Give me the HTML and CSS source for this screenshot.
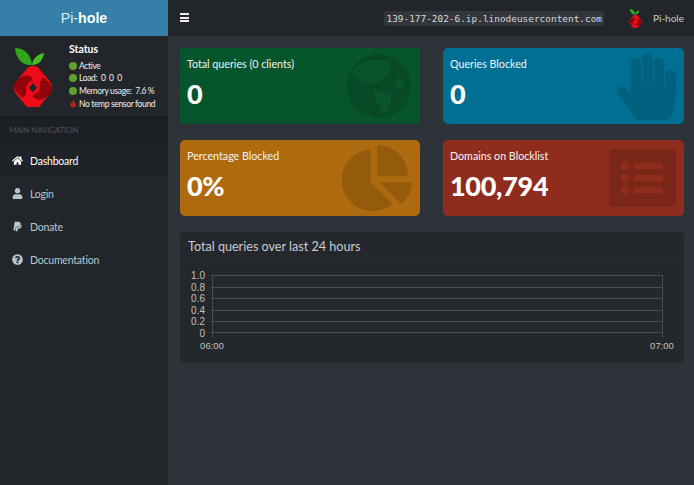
FILE: index.html
```html
<!DOCTYPE html>
<html lang="en">
<head>
    <meta charset="UTF-8">
    <meta name="viewport" content="width=device-width, initial-scale=1.0">
    <title>Pi-hole Admin Console</title>
    <link rel="stylesheet" href="styles.css">
</head>
<body>
    <div class="wrapper">
        <!-- Sidebar -->
        <aside class="sidebar">
            <div class="brand">Pi-<b>hole</b></div>
            <div class="user-panel">
                <svg class="logo" viewBox="0 0 40 59">
                    <path fill="#2fa81c" d="M2 0C10 0 18 5 19 17C11 18 3 12 2 0Z"/>
                    <path fill="#44c11f" d="M19 17C20 10 25 6 31 5C30 12 26 17 19 17Z"/>
                    <g transform="translate(0 -3.500) scale(1 1.200)">
                        <path fill="#ee0b19" d="M14 20C17 17 23 17 26 20L37 31C40 34 40 38 37 41L26 52C23 55 17 55 14 52L3 41C0 38 0 34 3 31Z"/>
                        <path fill="#8f0509" d="M5 29C12 24 19 26 20 30C15 31 13 33 13 39C13 43 11 44 9 44L3 39C-1 35 1 32 5 29Z"/>
                        <path fill="#8f0509" d="M35 43C28 48 21 46 20 42C25 41 27 39 27 33C27 29 29 28 31 28L37 33C41 37 39 40 35 43Z"/>
                        <path fill="#22262b" d="M20 32L24 36L20 40L16 36Z"/>
                    </g>
                </svg>
                <div class="status">
                    <div class="status-title">Status</div>
                    <div class="status-row"><span class="dot"></span>Active</div>
                    <div class="status-row"><span class="dot"></span>Load:&nbsp; 0&nbsp; 0&nbsp; 0</div>
                    <div class="status-row"><span class="dot"></span>Memory usage:&nbsp; 7.6 %</div>
                    <div class="status-row">
                        <svg class="flame" viewBox="0 0 10 10"><path fill="#b3261e" d="M5 0C5.500 2 8.500 3.500 8.500 6.500C8.500 8.500 7 10 5 10C3 10 1.500 8.500 1.500 6.500C1.500 5 2.200 4 3 3.200C3.200 4 3.500 4.500 4 4.800C4.500 3.500 4.300 1.500 5 0Z"/></svg>No temp sensor found
                    </div>
                </div>
            </div>
            <div class="nav-header">MAIN NAVIGATION</div>
            <nav class="nav">
                <a class="nav-item active">
                    <svg class="nav-icon" viewBox="0 0 576 512"><path d="M280.37 148.26L96 300.11V464a16 16 0 0 0 16 16l112.06-.29a16 16 0 0 0 15.92-16V368a16 16 0 0 1 16-16h64a16 16 0 0 1 16 16v95.64a16 16 0 0 0 16 16.05L464 480a16 16 0 0 0 16-16V300L295.67 148.26a12.19 12.19 0 0 0-15.3 0zM571.6 251.47L488 182.56V44.05a12 12 0 0 0-12-12h-56a12 12 0 0 0-12 12v72.61L318.47 43a48 48 0 0 0-61 0L4.34 251.47a12 12 0 0 0-1.6 16.9l25.5 31A12 12 0 0 0 45.15 301l235.22-193.74a12.19 12.19 0 0 1 15.3 0L530.9 301a12 12 0 0 0 16.9-1.6l25.5-31a12 12 0 0 0-1.7-16.93z"/></svg>
                    Dashboard
                </a>
                <a class="nav-item">
                    <svg class="nav-icon" viewBox="0 0 448 512"><path d="M224 256c70.7 0 128-57.3 128-128S294.7 0 224 0 96 57.3 96 128s57.3 128 128 128zm89.6 32h-16.7c-22.2 10.2-46.9 16-72.9 16s-50.6-5.800-72.900-16h-16.700C60.200 288 0 348.200 0 422.400V464c0 26.500 21.500 48 48 48h352c26.500 0 48-21.500 48-48v-41.600c0-74.200-60.200-134.400-134.400-134.400z"/></svg>
                    Login
                </a>
                <a class="nav-item">
                    <svg class="nav-icon" viewBox="0 0 384 512"><path d="M111.4 295.9c-3.5 19.2-17.4 108.7-21.5 134-.3 1.8-1 2.5-3 2.5H12.3c-7.6 0-13.1-6.6-12.1-13.9L58.8 46.6c1.5-9.6 10.1-16.9 20-16.9 152.3 0 165.1-3.7 204 11.4 60.1 23.3 65.6 79.5 44 140.3-21.5 62.6-72.5 89.5-140.1 90.3-43.4.7-69.5-7-75.3 24.2zM357.1 152c-1.8-1.3-2.5-1.8-3 1.3-2 11.4-5.1 22.5-8.8 33.6-39.9 113.8-150.5 103.9-204.5 103.9-6.1 0-10.1 3.3-10.9 9.4-22.6 140.4-27.1 169.7-27.1 169.7-1 7.1 3.5 12.9 10.6 12.9h63.5c8.6 0 15.7-6.3 17.4-14.9.7-5.4-1.1 6.1 14.4-91.3 4.6-22 14.3-19.7 29.3-19.7 71 0 126.4-28.8 142.9-112.3 6.5-34.8 4.6-71.4-23.8-92.6z"/></svg>
                    Donate
                </a>
                <a class="nav-item">
                    <svg class="nav-icon" viewBox="0 0 512 512"><path d="M504 256c0 136.997-111.043 248-248 248S8 392.997 8 256C8 119.083 119.043 8 256 8s248 111.083 248 248zM262.655 90c-54.497 0-89.255 22.957-116.549 63.758-3.536 5.286-2.353 12.415 2.715 16.258l34.699 26.310c5.205 3.947 12.621 3.008 16.665-2.122 17.864-22.658 30.113-35.797 57.303-35.797 20.429 0 45.698 13.148 45.698 32.958 0 14.976-12.363 22.667-32.534 33.976C247.128 238.528 216 254.941 216 296v4c0 6.627 5.373 12 12 12h56c6.627 0 12-5.373 12-12v-1.333c0-28.462 83.186-29.647 83.186-106.667 0-58.002-60.165-102-116.531-102zM256 338c-25.365 0-46 20.635-46 46 0 25.364 20.635 46 46 46s46-20.636 46-46c0-25.365-20.635-46-46-46z"/></svg>
                    Documentation
                </a>
            </nav>
        </aside>

        <div class="main">
            <!-- Top bar -->
            <header class="topbar">
                <div class="burger"><span></span><span></span><span></span></div>
                <code class="hostname">139-177-202-6.ip.linodeusercontent.com</code>
                <svg class="logo-small" viewBox="0 0 40 59">
                    <path fill="#2fa81c" d="M2 0C10 0 18 5 19 17C11 18 3 12 2 0Z"/>
                    <path fill="#44c11f" d="M19 17C20 10 25 6 31 5C30 12 26 17 19 17Z"/>
                    <g transform="translate(0 -3.500) scale(1 1.200)">
                        <path fill="#ee0b19" d="M14 20C17 17 23 17 26 20L37 31C40 34 40 38 37 41L26 52C23 55 17 55 14 52L3 41C0 38 0 34 3 31Z"/>
                        <path fill="#8f0509" d="M5 29C12 24 19 26 20 30C15 31 13 33 13 39C13 43 11 44 9 44L3 39C-1 35 1 32 5 29Z"/>
                        <path fill="#8f0509" d="M35 43C28 48 21 46 20 42C25 41 27 39 27 33C27 29 29 28 31 28L37 33C41 37 39 40 35 43Z"/>
                    </g>
                </svg>
                <span class="topbar-name">Pi-hole</span>
            </header>

            <div class="content">
                <div class="cards">
                    <div class="card green">
                        <div class="card-title">Total queries (0 clients)</div>
                        <div class="card-value">0</div>
                        <svg class="card-icon globe" viewBox="0 0 64 64">
                            <circle cx="32" cy="32" r="32" fill="#064a27"/>
                            <path fill="#07542d" d="M14 9C20 6 28 5 34 6C39 7 43 8 44 11C43 15 42 17 41 19C37 23 35 27 31 29C26 30 21 30 17 29C13 27 11 25 9 23C7 22 5 21 4 19C7 15 10 12 14 9ZM27 36C33 37 39 39 44 43C44 48 43 52 41 56C39 59 38 60 36 61C35 56 33 53 31 49C29 45 27 41 27 36ZM51 23C54 24 56 26 57 29C57 32 56 34 54 36C51 34 49 32 47 29C48 27 49 25 51 23Z"/>
                        </svg>
                    </div>
                    <div class="card blue">
                        <div class="card-title">Queries Blocked</div>
                        <div class="card-value">0</div>
                        <svg class="card-icon hand" viewBox="0 0 448 512"><path fill="#02617f" d="M408.781 128.007C386.356 127.578 368 146.360 368 168.790V256h-8V79.790c0-22.430-18.356-41.212-40.781-40.783C297.488 39.423 280 57.169 280 79v177h-8V40.790C272 18.360 253.644-.422 231.219.007 209.488.423 192 18.169 192 40v216h-8V80.790c0-22.430-18.356-41.212-40.781-40.783C121.488 40.423 104 58.169 104 80v235.992l-31.648-43.519c-12.993-17.866-38.009-21.817-55.877-8.823-17.865 12.994-21.815 38.010-8.822 55.877l125.601 172.705A48 48 0 0 0 171.070 512h197.940c22.270 0 41.620-15.320 46.710-37l26.570-112.920a192 192 0 0 0 5.710-46.440V168c0-21.831-17.488-39.577-39.219-40z"/></svg>
                    </div>
                    <div class="card orange">
                        <div class="card-title">Percentage Blocked</div>
                        <div class="card-value">0%</div>
                        <svg class="card-icon pie" viewBox="0 0 544 512"><path fill="#945b0c" d="M527.790 288H290.500l158.030 158.030c6.040 6.040 15.980 6.530 22.190.680 38.700-36.460 65.320-85.610 73.130-140.860 1.340-9.460-6.510-17.850-16.060-17.850zm-15.830-64.800C503.720 103.740 408.260 8.280 288.800.040 279.680-.590 272 7.100 272 16.240V240h223.770c9.140 0 16.820-7.680 16.190-16.800zM224 288V50.710c0-9.550-8.390-17.400-17.840-16.060C86.990 51.490-4.100 155.600.140 280.370 4.500 408.510 114.830 513.590 243.030 511.980c50.400-.630 96.970-16.870 135.260-44.030 7.900-5.600 8.420-17.230 1.570-24.080L224 288z"/></svg>
                    </div>
                    <div class="card red">
                        <div class="card-title">Domains on Blocklist</div>
                        <div class="card-value">100,794</div>
                        <svg class="card-icon list" viewBox="0 0 67 58">
                            <rect width="67" height="58" rx="5" fill="#7a2619"/>
                            <g fill="#8f2c1e">
                                <circle cx="16" cy="17" r="4.500"/><circle cx="16" cy="29" r="4.500"/><circle cx="16" cy="41" r="4.500"/>
                                <rect x="25" y="14" width="29" height="6.500" rx="1.500"/><rect x="25" y="26" width="29" height="6.500" rx="1.500"/><rect x="25" y="38" width="29" height="6.500" rx="1.500"/>
                            </g>
                        </svg>
                    </div>
                </div>

                <section class="chart-box">
                    <h3 class="chart-title">Total queries over last 24 hours</h3>
                    <svg class="chart" viewBox="0 0 504 100">
                        <g class="grid">
                            <line x1="31" x2="482" y1="12.500" y2="12.500"/>
                            <line x1="31" x2="482" y1="24.500" y2="24.500"/>
                            <line x1="31" x2="482" y1="35.500" y2="35.500"/>
                            <line x1="31" x2="482" y1="47.500" y2="47.500"/>
                            <line x1="31" x2="482" y1="58.500" y2="58.500"/>
                            <line x1="31" x2="482" y1="69.500" y2="69.500"/>
                            <line x1="32.500" x2="32.500" y1="12" y2="74"/>
                            <line x1="482.500" x2="482.500" y1="12" y2="74"/>
                        </g>
                        <g class="ticks">
                            <text x="25" y="16">1.0</text>
                            <text x="25" y="27.500">0.8</text>
                            <text x="25" y="39">0.6</text>
                            <text x="25" y="50.500">0.4</text>
                            <text x="25" y="62">0.2</text>
                            <text x="25" y="73.500">0</text>
                        </g>
                        <text class="xtick" x="32" y="86">06:00</text>
                        <text class="xtick" x="482" y="86">07:00</text>
                    </svg>
                </section>
            </div>
        </div>
    </div>
</body>
</html>
```

FILE: styles.css
```css
* {
    box-sizing: border-box;
}

body {
    margin: 0;
    height: 485px;
    overflow: hidden;
    font-family: "Lato", "Open Sans", sans-serif;
    background-color: #2e3239;
    color: #fff;
}

.wrapper {
    display: flex;
    height: 100%;
}

/* Sidebar */
.sidebar {
    width: 168px;
    flex-shrink: 0;
    background-color: #22262b;
}

.brand {
    height: 36px;
    background-color: #367fa9;
    color: #dfeaf2;
    font-family: "Liberation Sans", sans-serif;
    font-size: 14.200px;
    line-height: 36px;
    text-align: center;
}

.brand b {
    color: #fff;
}

.user-panel {
    display: flex;
    height: 80px;
    padding: 6px 0 0 13px;
}

.logo {
    width: 40px;
    height: 59px;
    margin-top: 6px;
    flex-shrink: 0;
}

.status {
    margin-left: 16px;
    font-size: 8.500px;
    letter-spacing: -0.350px;
    color: #f0f0f0;
}

.status-title {
    font-size: 10.500px;
    font-weight: 700;
    letter-spacing: 0;
    line-height: 14px;
    margin-bottom: 3.500px;
    color: #fff;
}

.status-row {
    display: flex;
    align-items: center;
    height: 12.600px;
    white-space: nowrap;
}

.dot {
    width: 8px;
    height: 8px;
    margin-right: 2px;
    border-radius: 50%;
    background-color: #5ea12c;
}

.flame {
    width: 8px;
    height: 9px;
    margin-right: 2px;
}

.nav-header {
    height: 28px;
    padding-left: 9px;
    background-color: #1c1f23;
    color: #4b5056;
    font-size: 8px;
    letter-spacing: -0.200px;
    line-height: 29px;
}

.nav-item {
    display: flex;
    align-items: center;
    height: 33px;
    padding-left: 12px;
    color: #b8c7ce;
    font-size: 10.500px;
    letter-spacing: -0.200px;
}

.nav-item.active {
    background-color: #1f2327;
    color: #fff;
}

.nav-icon {
    width: 11px;
    height: 11px;
    margin-right: 7px;
    fill: currentColor;
}

/* Main column */
.main {
    flex: 1;
    min-width: 0;
}

.topbar {
    display: flex;
    align-items: center;
    height: 36px;
    padding-left: 12px;
    background-color: #22262b;
}

.burger {
    display: flex;
    flex-direction: column;
    gap: 1.500px;
    width: 9px;
    margin-bottom: 1px;
}

.burger span {
    height: 2px;
    background-color: #eee;
}

.hostname {
    margin-left: auto;
    padding: 2px 2px;
    border-radius: 3px;
    background-color: #33373d;
    color: #d6d8da;
    font-family: "DejaVu Sans Mono", monospace;
    font-size: 9.430px;
}

.logo-small {
    width: 13px;
    height: 19px;
    margin-left: 25px;
}

.topbar-name {
    margin: 0 10px 0 11px;
    color: #c9ccd0;
    font-size: 10px;
}

.content {
    padding: 12px 10px 0 12px;
}

.cards {
    display: grid;
    grid-template-columns: 240px 241px;
    justify-content: space-between;
    row-gap: 16px;
}

.card {
    position: relative;
    height: 76px;
    padding: 8px 7px 0;
    border-radius: 5px;
    overflow: hidden;
}

.green { background-color: #07552c; border-radius: 3px; }
.blue { background-color: #006f94; }
.orange { background-color: #ae6a0e; }
.red { background-color: #8f2c1e; }

.card-title {
    font-size: 10.700px;
    line-height: 15px;
    color: #f4f4f4;
}

.card-value {
    margin-top: 5px;
    font-size: 27px;
    font-weight: 900;
    letter-spacing: -0.300px;
    line-height: 36px;
}

.card-icon {
    position: absolute;
}

.globe { top: 6px; right: 9px; width: 64px; height: 64px; }
.hand { top: 5px; right: 8px; width: 59px; height: 67px; }
.pie { top: 5px; right: 7px; width: 72px; height: 66px; }
.list { top: 9px; right: 8px; width: 67px; height: 58px; }

.chart-box {
    margin-top: 16px;
    height: 131px;
    border-radius: 5px;
    background-color: #24272b;
}

.chart-title {
    height: 31px;
    margin: 0;
    padding-left: 8px;
    border-bottom: 1px solid #2a2d32;
    color: #c9ccd0;
    font-size: 12.600px;
    font-weight: 400;
    line-height: 29px;
}

.chart {
    display: block;
    width: 504px;
    height: 100px;
}

.grid line {
    stroke: #4a4e54;
    stroke-width: 1;
}

.ticks text {
    fill: #c0c2c5;
    font-family: "Liberation Sans", sans-serif;
    font-size: 10px;
    text-anchor: end;
}

.xtick {
    fill: #c0c2c5;
    font-family: "Liberation Sans", sans-serif;
    font-size: 9.500px;
    text-anchor: middle;
}
```
